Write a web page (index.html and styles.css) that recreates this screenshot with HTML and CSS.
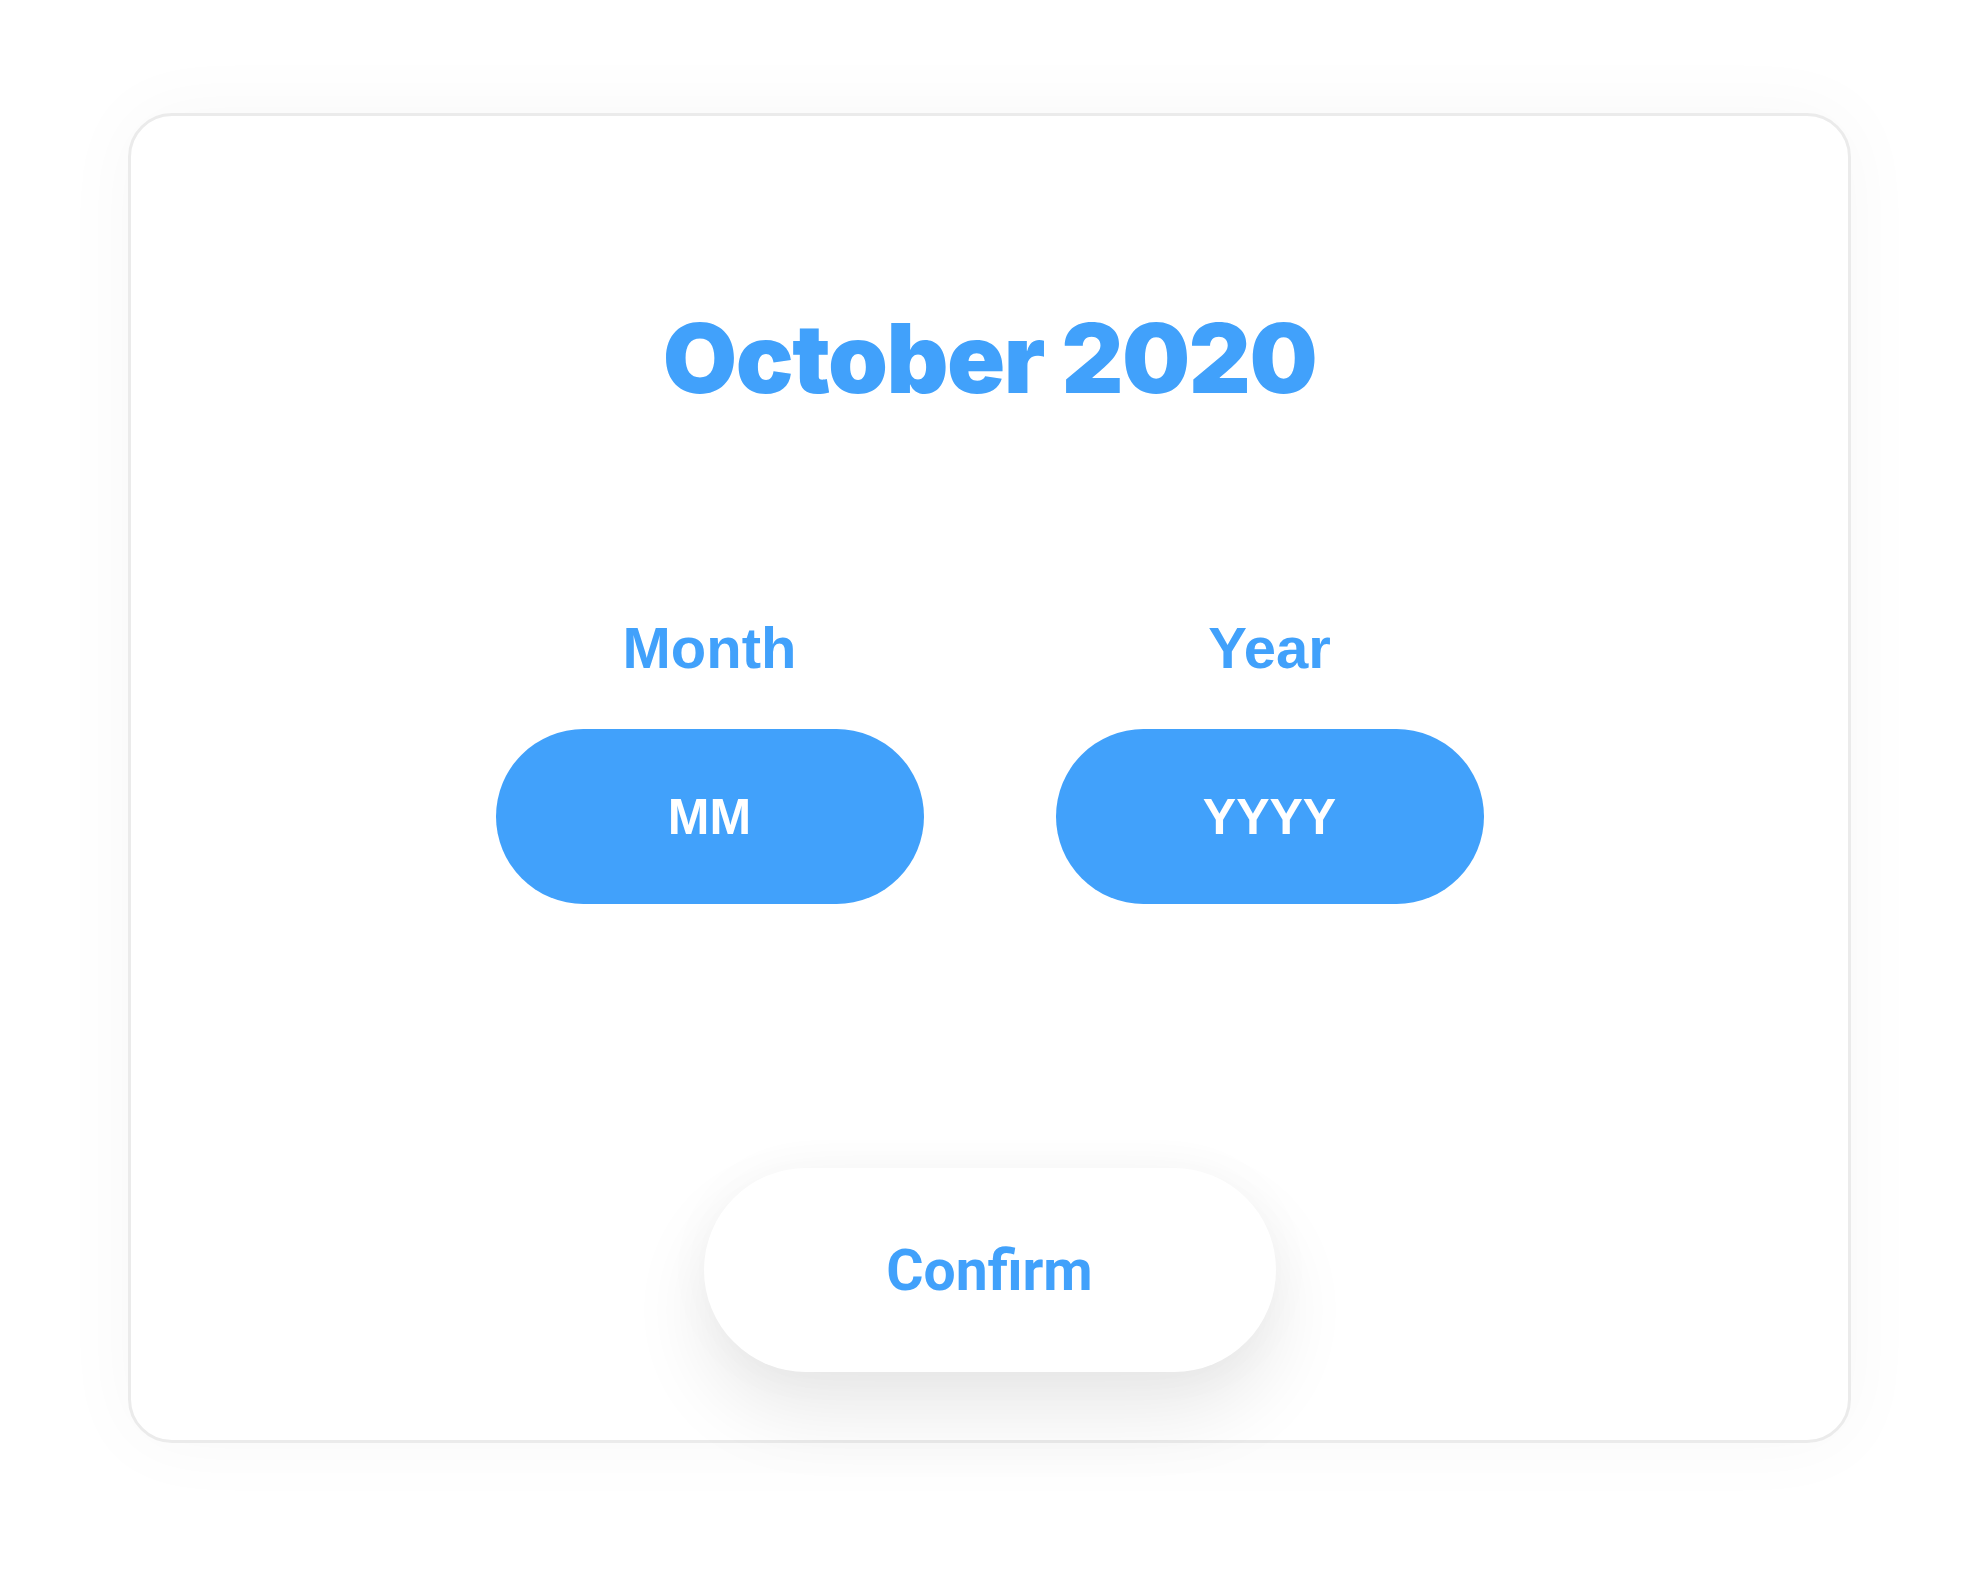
FILE: index.html
```html
<!DOCTYPE html>
<html lang="en">
<head>
<meta charset="utf-8">
<title>Date picker</title>
<link rel="stylesheet" href="styles.css">
</head>
<body>
<main class="card">
  <h1 class="title">October 2020</h1>
  <div class="fields">
    <div class="field">
      <span class="field-label">Month</span>
      <div class="pill">MM</div>
    </div>
    <div class="field">
      <span class="field-label">Year</span>
      <div class="pill">YYYY</div>
    </div>
  </div>
  <button class="confirm" type="button">Confirm</button>
</main>
</body>
</html>
```
FILE: styles.css
```css
html, body {
  margin: 0;
  padding: 0;
  background: #ffffff;
}

body {
  padding: 113px 128px 0 128px;
  box-sizing: border-box;
  width: 1980px;
  height: 1588px;
  overflow: hidden;
}

.card {
  box-sizing: border-box;
  width: 1723px;
  height: 1330px;
  border: 3px solid #ebebeb;
  border-radius: 44px;
  background: #ffffff;
  box-shadow: 0 0 80px rgba(0, 0, 0, 0.035);
  display: flex;
  flex-direction: column;
  align-items: center;
  padding-top: 194px;
}

.title {
  margin: 0;
  font-family: "Inter", "Noto Sans", sans-serif;
  font-weight: 900;
  font-size: 96px;
  line-height: 96px;
  color: #41a1fb;
  letter-spacing: -1.5px;
}

.fields {
  display: grid;
  grid-template-columns: 428px 428px;
  column-gap: 132px;
  margin-top: 213px;
}

.field {
  display: flex;
  flex-direction: column;
  align-items: center;
}

.field-label {
  font-family: "Liberation Sans", Arial, sans-serif;
  font-weight: 700;
  font-size: 58px;
  line-height: 58px;
  color: #41a1fb;
}

.pill {
  margin-top: 52px;
  width: 428px;
  height: 175px;
  border-radius: 88px;
  background: #41a1fb;
  color: #ffffff;
  display: flex;
  align-items: center;
  justify-content: center;
  font-family: "Liberation Sans", Arial, sans-serif;
  font-weight: 700;
  font-size: 50px;
}

.confirm {
  margin-top: 264px;
  width: 572px;
  height: 204px;
  border: none;
  border-radius: 102px;
  background: #ffffff;
  box-shadow: 0 40px 80px rgba(0, 0, 0, 0.09), 0 0 50px rgba(0, 0, 0, 0.03);
  font-family: "Roboto", "Liberation Sans", sans-serif;
  font-weight: 700;
  font-size: 57px;
  color: #41a1fb;
  padding: 0;
  cursor: pointer;
}
```
